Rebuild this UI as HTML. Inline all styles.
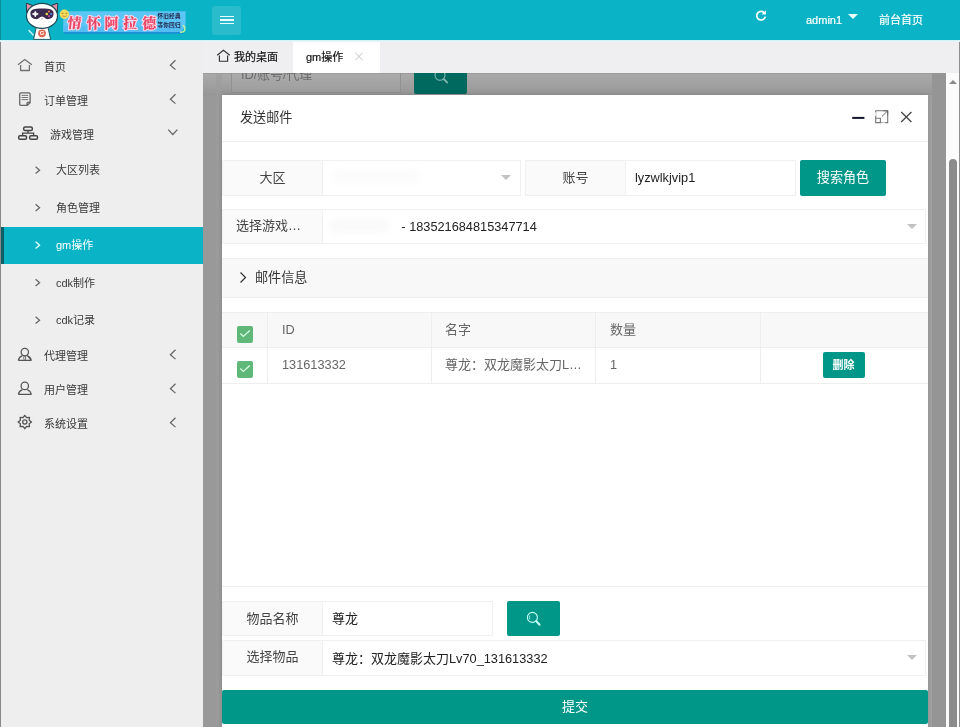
<!DOCTYPE html>
<html lang="zh-CN">
<head>
<meta charset="utf-8">
<title>后台管理</title>
<style>
*{box-sizing:border-box;margin:0;padding:0}
html,body{width:960px;height:727px;overflow:hidden;background:#fff}
body{position:relative;font-family:"Liberation Sans","Noto Sans CJK SC",sans-serif;font-size:13px;color:#333;-webkit-font-smoothing:antialiased}
.abs{position:absolute}
svg{display:block;position:absolute;overflow:visible}
/* header */
#hd{left:0;top:0;width:960px;height:40px;background:#0ab4c6}
#hdline{left:0;top:40px;width:960px;height:2px;background:linear-gradient(#cdf3f7,#e9f6f8);z-index:5}
#burger{left:212.4px;top:5.7px;width:29px;height:29.5px;border-radius:3px;background:#2abccd}
#burger i{position:absolute;left:7.6px;width:14px;height:1.4px;background:#e8fbfd}
.hdt{color:#fff;font-size:11px;line-height:14px;white-space:nowrap;-webkit-text-stroke:0.2px #fff}
/* sidebar */
#sb{left:0;top:41px;width:203px;height:686px;background:#eeeeee}
#sbedge{left:0;top:41px;width:1px;height:686px;background:#8a8a8a}
.mi{position:absolute;left:0;width:203px;height:34px;font-size:11px;color:#3a3a3a;line-height:34px;white-space:nowrap}
.mi span{position:absolute;left:44px;top:0}
.si{position:absolute;left:0;width:203px;height:37.5px;font-size:11px;color:#3a3a3a;line-height:37.5px;white-space:nowrap}
.si span{position:absolute;left:56px;top:0.5px}
.si.on{background:#0ab4c6;color:#fff}
.si.on:before{content:"";position:absolute;left:0;top:0;width:4px;height:100%;background:#0d5f66}
/* tabs */
#tabs{left:203px;top:41px;width:757px;height:32px;background:#efeff1}
#tabon{left:293px;top:41px;width:87px;height:32px;background:#fff}
.tt{font-size:11px;line-height:14px;color:#111;white-space:nowrap;-webkit-text-stroke:0.2px #111}
/* mask */
#mask{left:203px;top:73px;width:743px;height:654px;background:#999}
#mask:after{content:"";position:absolute;left:725px;top:0;width:4px;height:654px;background:#a2a2a2}
/* scrollbar */
#track{left:946px;top:73px;width:13px;height:654px;background:#fbfbfb}
#thumb{left:949px;top:159px;width:8px;height:580px;border-radius:4px;background:#8b8b8b}
#redge{left:959px;top:41px;width:1px;height:686px;background:#8e8e8e}
/* modal */
#md{left:222px;top:95px;width:706px;height:640px;background:#fff;box-shadow:0 0 5px rgba(0,0,0,.16)}
.ln{position:absolute;height:1px;background:#eeeeee}
.lb{position:absolute;width:101px;height:35px;background:#fafafa;border:1px solid #f0f0f0;text-align:center;line-height:34px;font-size:13px;color:#444;white-space:nowrap}
.ip{position:absolute;height:35px;background:#fff;border:1px solid #f0f0f0;line-height:34px;font-size:13px;color:#222;padding-left:9px;white-space:nowrap;overflow:hidden}
.car{position:absolute;width:0;height:0;border-left:5.5px solid transparent;border-right:5.5px solid transparent;border-top:5.5px solid #c2c2c2}
.btn{position:absolute;background:#009688;color:#fff;border-radius:2px;text-align:center;white-space:nowrap}
.th{position:absolute;font-size:13px;color:#666;line-height:16px;white-space:nowrap}
.n{font-size:12.75px}
.cb{position:absolute;width:16px;height:17px;border-radius:2px;background:#5fb878}
</style>
</head>
<body>
<div id="root" class="abs" style="left:0;top:0;width:960px;height:727px;overflow:hidden;will-change:transform">
<!-- header -->
<div id="hd" class="abs"></div>
<div id="hdline" class="abs"></div>
<div id="burger" class="abs"><i style="top:10px"></i><i style="top:13.6px"></i><i style="top:17.2px"></i></div>
<div id="logo" class="abs" style="left:0;top:0;width:203px;height:40px">
<svg style="left:0;top:0" width="203" height="40" viewBox="0 0 203 40">
  <!-- banner -->
  <rect x="64" y="32" width="119" height="1.8" fill="#1c8fd6"/>
  <path d="M63.2 11.2H185.6V27L180 32H63.2Z" fill="#5cc6f6"/>
  <path d="M63.2 26H182V32H63.2Z" fill="#55bdf3"/>
  <path d="M182.6 25.4a3.5 3.5 0 1 1 -2.4 6.6" fill="none" stroke="#c4f2a4" stroke-width="1.5"/>
  <!-- tail -->
  <path d="M29 30.5L33.2 35" stroke="#d9f6fb" stroke-width="1.3" fill="none" stroke-linecap="round"/>
  <!-- ears -->
  <path d="M26.6 12.5L26.3 4.2Q26.3 3.2 27.4 3.5L34.5 6.2Z" fill="#e98ea6" stroke="#1d4a55" stroke-width="1.1" stroke-linejoin="round"/>
  <path d="M57.4 12.5L57.7 4.2Q57.7 3.2 56.6 3.5L49.5 6.2Z" fill="#e98ea6" stroke="#1d4a55" stroke-width="1.1" stroke-linejoin="round"/>
  <!-- body -->
  <path d="M36.2 27.5L33.6 39.4H50.6L48 27.5Z" fill="#ffffff" stroke="#1d4a55" stroke-width="0.9" stroke-linejoin="round"/>
  <circle cx="42" cy="33.3" r="3.9" fill="#e0674f"/>
  <!-- head -->
  <ellipse cx="42" cy="15.9" rx="15.5" ry="12.5" fill="#ffffff" stroke="#1d4a55" stroke-width="1.2"/>
  <path d="M30.4 13.5C30.4 9.6 33.5 8.6 42 8.6C50.5 8.6 53.6 9.6 53.6 13.5C53.6 17.2 51 19.2 47.6 19.2C45 19.2 44.2 16.6 42 16.6C39.8 16.6 39 19.2 36.4 19.2C33 19.2 30.4 17.2 30.4 13.5Z" fill="#3b2a4f"/>
  <path d="M35.3 11.2L36.2 13.2L38.3 14L36.2 14.8L35.3 16.8L34.4 14.8L32.3 14L34.4 13.2Z" fill="#ffffff" stroke="#fff" stroke-width="0.8" stroke-linejoin="round"/>
  <circle cx="46.8" cy="14" r="1.3" fill="#f2d24a"/>
  <circle cx="49" cy="11.6" r="1" fill="#e8794a"/>
  <circle cx="51.2" cy="14" r="1.1" fill="#5a8be0"/>
  <circle cx="49" cy="16.2" r="1" fill="#c94f9c"/>
  <path d="M41 18.6h2l-1 1z" fill="#8a7a7a"/>
  <!-- emoji -->
  <circle cx="64.4" cy="14.3" r="4.7" fill="#f4dc5a"/>
  <path d="M61.6 13.4h2M65.4 13.4h2" stroke="#b9832a" stroke-width="1"/>
  <path d="M62.4 15.8q2 1.6 4 0" stroke="#c8742a" stroke-width="0.8" fill="none"/>
  <text x="42" y="35.4" text-anchor="middle" font-family="Liberation Sans, sans-serif" font-weight="bold" font-size="6" fill="#fff">G</text>
  <g font-family="Liberation Serif, Noto Serif CJK SC, serif" font-weight="900" font-size="14" fill="#ea4766" stroke="#fbd9ec" stroke-width="2.1" paint-order="stroke" stroke-linejoin="round">
    <text x="67.6" y="27.6" transform="skewX(-6)" style="transform-origin:74px 22px">情</text>
    <text x="86.4" y="27.6">怀</text>
    <text x="104.4" y="27.6">阿</text>
    <text x="123.2" y="27.6">拉</text>
    <text x="142.2" y="27.6">德</text>
  </g>
  <g font-family="Liberation Sans, Noto Sans CJK SC, sans-serif" font-weight="bold" font-size="5.6" fill="#23264a" letter-spacing="0.2">
    <text x="157.5" y="18.3">怀旧经典</text>
    <text x="157.5" y="26.9">等你回归</text>
  </g>
</svg>
</div>
<svg style="left:755px;top:9px" width="12" height="13" viewBox="0 0 12 13"><path d="M9.6 4.2A4.3 4.3 0 1 0 10.3 7.6" fill="none" stroke="#fff" stroke-width="1.7"/><path d="M6.6 5.6L10.9 5.6L10.9 1.2Z" fill="#fff"/></svg>
<div class="abs hdt" style="left:806px;top:13px">admin1</div>
<div class="abs" style="left:848px;top:14px;width:0;height:0;border-left:5px solid transparent;border-right:5px solid transparent;border-top:5px solid #e8fbfd"></div>
<div class="abs hdt" style="left:879px;top:13px">前台首页</div>

<!-- sidebar -->
<div id="sb" class="abs">
  <div class="mi" style="top:9px"><span>首页</span></div>
  <div class="mi" style="top:43px"><span>订单管理</span></div>
  <div class="mi" style="top:77px"><span style="left:50px">游戏管理</span></div>
  <div class="si" style="top:110.5px"><span>大区列表</span></div>
  <div class="si" style="top:148px"><span>角色管理</span></div>
  <div class="si on" style="top:185.5px"><span>gm操作</span></div>
  <div class="si" style="top:223px"><span>cdk制作</span></div>
  <div class="si" style="top:260.5px"><span>cdk记录</span></div>
  <div class="mi" style="top:298px"><span>代理管理</span></div>
  <div class="mi" style="top:332px"><span>用户管理</span></div>
  <div class="mi" style="top:366px"><span>系统设置</span></div>
</div>
<div id="sbedge" class="abs"></div>
<div class="abs" style="left:0;top:0;width:1px;height:41px;background:#0b8d9b"></div>
<svg id="ic" style="left:0;top:0" width="203" height="727" viewBox="0 0 203 727" fill="none" stroke="#666" stroke-width="1.05">
  <!-- home -->
  <path d="M18 64.8L24.8 59.6L31.8 64.8M20.6 65V70.5H29.4V65" stroke="#727272" stroke-width="1.3" stroke-linejoin="round"/>
  <!-- doc -->
  <path d="M20.8 92.8H29Q30.1 92.8 30.1 93.9V102.6L27.3 105.3H20.8Q19.7 105.3 19.7 104.2V93.9Q19.7 92.8 20.8 92.8ZM27 105V103.2Q27 102.4 27.8 102.4H29.8" stroke="#666" stroke-width="1.3"/>
  <path d="M21.6 95.4H28.2M21.6 97.5H28.2M21.6 99.6H28.2" stroke="#777" stroke-width="1"/>
  <!-- org -->
  <g stroke="#444" stroke-width="1.5">
    <rect x="23.7" y="127.1" width="8.6" height="3.5" rx="1.3"/>
    <rect x="18.7" y="135.8" width="7.8" height="3.5" rx="1.3"/>
    <rect x="29.7" y="135.8" width="7.8" height="3.5" rx="1.3"/>
    <path d="M28 130.6V133.2M22.6 135.8V133.2H33.6V135.8" stroke-width="1.3"/>
  </g>
  <!-- agent -->
  <g stroke="#555" stroke-width="1.25">
    <circle cx="24.8" cy="352.1" r="3.7"/>
    <path d="M18.3 360.3C18.8 358 20.4 356.5 22.3 355.7M27.3 355.7C29.2 356.5 30.9 358 31.5 360.3ZM18.3 360.3H31.5"/>
    <ellipse cx="24.7" cy="358" rx="1" ry="2.2" stroke-width="0.8"/>
  </g>
  <!-- user -->
  <g stroke="#555" stroke-width="1.25">
    <circle cx="24.8" cy="385.9" r="3.7"/>
    <path d="M18.3 394.3C18.8 392 20.4 390.4 22.3 389.6M27.3 389.6C29.2 390.4 30.9 392 31.5 394.3M18.3 394.3H31.5"/>
  </g>
  <!-- gear -->
  <g stroke="#555" stroke-width="1.3">
    <path d="M24.8 415.3L26.6 417.6L29.5 417.3L29.2 420.2L31.5 422L29.2 423.8L29.5 426.7L26.6 426.4L24.8 428.7L23 426.4L20.1 426.7L20.4 423.8L18.1 422L20.4 420.2L20.1 417.3L23 417.6Z" stroke-linejoin="round"/>
    <circle cx="24.8" cy="422" r="2.1"/>
  </g>
  <!-- chevrons -->
  <g stroke="#666" stroke-width="1.25">
    <path d="M175.5 60.3L170.4 65.2L175.5 69.6"/>
    <path d="M175.5 94.3L170.4 99.2L175.5 103.6"/>
    <path d="M168.2 129.6L172.8 134.5L177.4 129.6"/>
    <path d="M175.5 349.8L170.4 354.7L175.5 359.1"/>
    <path d="M175.5 383.8L170.4 388.7L175.5 393.1"/>
    <path d="M175.5 417.8L170.4 422.7L175.5 427.1"/>
    <path d="M35.6 166.8L39.6 170.2L35.6 173.6"/>
    <path d="M35.6 204.3L39.6 207.7L35.6 211.1"/>
    <path d="M35.6 241.8L39.6 245.2L35.6 248.6" stroke="#e8fdff" stroke-width="1.3"/>
    <path d="M35.6 279.3L39.6 282.7L35.6 286.1"/>
    <path d="M35.6 316.8L39.6 320.2L35.6 323.6"/>
  </g>
</svg>


<!-- tabs -->
<div id="tabs" class="abs"></div>
<div id="tabon" class="abs"></div>
<div class="abs tt" style="left:234px;top:50px">我的桌面</div>
<div class="abs tt" style="left:306px;top:50px">gm操作</div>

<svg style="left:0;top:0" width="960" height="100" viewBox="0 0 960 100" fill="none">
  <!-- tab home -->
  <path d="M217.2 55.2L223.4 50.2L229.8 55.2M219.4 55.4V61.2H227.6V55.4" stroke="#333" stroke-width="1.15"/>
  <!-- tab close -->
  <path d="M355.3 52.8L362.6 60.2M362.6 52.8L355.3 60.2" stroke="#c4c4c4" stroke-width="1"/>
</svg>
<!-- mask -->
<div id="mask" class="abs"></div>
<div class="abs" style="left:293px;top:73px;width:87px;height:1px;background:#f4f4f4"></div>
<div class="abs" style="left:203px;top:73px;width:743px;height:22px;background:linear-gradient(#959595 0,#a8a8a8 1.5px,#a6a6a6 5px,#989898 21px,#939393 22px)"></div>
<div class="abs" style="left:216px;top:73px;width:6px;height:654px;background:#9d9d9d;opacity:.6"></div>
<div class="abs" style="left:203px;top:73px;width:743px;height:22px;overflow:hidden">
  <div class="abs" style="left:28px;top:-14px;width:170px;height:34px;border:1px solid #919191;background:rgba(255,255,255,.03)"></div>
  <div class="abs" style="left:38px;top:-6.5px;font-size:12.8px;line-height:16px;color:#6c6c6c;white-space:nowrap">ID/账号/代理</div>
  <div class="abs" style="left:211px;top:-14px;width:53px;height:34.6px;border-radius:2px;background:#00695f"></div>
  <svg style="left:211px;top:0" width="53" height="21" viewBox="0 0 53 21" fill="none"><circle cx="26" cy="2.3" r="5" stroke="#7fb5ae" stroke-width="1.1"/><path d="M29.9 6.1L33 9.4" stroke="#7fb5ae" stroke-width="2" stroke-linecap="round"/></svg>
</div>
<div class="abs" style="left:932px;top:73px;width:14px;height:654px;background:#959595"></div>
<!-- scrollbar -->
<div id="track" class="abs"></div>
<div id="thumb" class="abs"></div>
<div class="abs" style="left:948.5px;top:80px;width:0;height:0;border-left:4.5px solid transparent;border-right:4.5px solid transparent;border-bottom:4.5px solid #8a8a8a"></div>
<div id="redge" class="abs"></div>

<!-- modal -->
<div id="md" class="abs">
  <div class="abs" style="left:18px;top:14px;font-size:13.1px;line-height:18px;color:#333;white-space:nowrap">发送邮件</div>
  <div class="ln" style="left:0;top:46px;width:706px"></div>

  <div class="lb" style="left:0;top:65px;height:36px;line-height:33px">大区</div>
  <div class="ip" style="left:100px;top:65px;width:199px;height:36px;line-height:33px"></div>
  <div class="car" style="left:278.5px;top:80px"></div>
  <div class="lb" style="left:303px;top:65px;height:36px;line-height:33px">账号</div>
  <div class="ip" style="left:403px;top:65px;width:171px;height:36px;line-height:33px"><span class="n">lyzwlkjvip1</span></div>
  <div class="btn" style="left:578px;top:65px;width:86px;height:36px;line-height:36px;font-size:13.1px">搜索角色</div>

  <div class="lb" style="left:0;top:114px;text-align:left;padding-left:13px;line-height:32px">选择游戏…</div>
  <div class="ip" style="left:100px;top:114px;width:604px;line-height:34px"><span style="display:inline-block;width:65.8px"></span><span class="n"> - 183521684815347714</span></div>
  <div class="car" style="left:684.5px;top:129px"></div>
  <div class="abs" style="left:110px;top:75px;width:88px;height:14px;border-radius:7px;background:#fbfbfb;filter:blur(3px)"></div>
  <div class="abs" style="left:106px;top:124px;width:62px;height:14px;border-radius:7px;background:#fafafa;filter:blur(3px)"></div>

  <div class="abs" style="left:0;top:163px;width:706px;height:40px;background:#f8f8f8;border-top:1px solid #eee;border-bottom:1px solid #eee"></div>
  <div class="abs" style="left:33px;top:174px;font-size:13.1px;line-height:18px;color:#333;white-space:nowrap">邮件信息</div>

  <!-- table -->
  <div class="abs" style="left:0;top:217px;width:706px;height:36px;background:#f8f8f8;border-top:1px solid #eee;border-bottom:1px solid #eee"></div>
  <div class="ln" style="left:0;top:288px;width:706px"></div>
  <div class="abs" style="left:45px;top:217px;width:1px;height:72px;background:#eee"></div>
  <div class="abs" style="left:209px;top:217px;width:1px;height:72px;background:#eee"></div>
  <div class="abs" style="left:373px;top:217px;width:1px;height:72px;background:#eee"></div>
  <div class="abs" style="left:538px;top:217px;width:1px;height:72px;background:#eee"></div>
  <div class="cb" style="left:15px;top:230.5px"></div>
  <div class="cb" style="left:15px;top:265.5px"></div>
  <div class="th" style="left:60px;top:227px"><span class="n">ID</span></div>
  <div class="th" style="left:223px;top:227px">名字</div>
  <div class="th" style="left:388px;top:227px">数量</div>
  <div class="th" style="left:60px;top:261.5px"><span class="n">131613332</span></div>
  <div class="th" style="left:223px;top:261.5px">尊龙：双龙魔影太刀<span class="n">L…</span></div>
  <div class="th" style="left:388px;top:261.5px"><span class="n">1</span></div>
  <div class="btn" style="left:600.5px;top:257px;width:42px;height:26px;line-height:26px;font-size:11px;font-weight:bold">删除</div>

  <div class="ln" style="left:0;top:491px;width:706px"></div>
  <div class="lb" style="left:0;top:506px;line-height:33px">物品名称</div>
  <div class="ip" style="left:100px;top:506px;width:171px;line-height:33px">尊龙</div>
  <div class="btn" style="left:284.5px;top:506px;width:53px;height:35px"></div>
  <div class="lb" style="left:0;top:545px;height:36px;line-height:32px">选择物品</div>
  <div class="ip" style="left:100px;top:545px;width:604px;height:36px;line-height:35px">尊龙：双龙魔影太刀<span class="n">Lv70_131613332</span></div>
  <div class="car" style="left:684.5px;top:560px"></div>
  <div class="btn" style="left:0;top:595px;width:706px;height:34px;line-height:34px;font-size:13px">提交</div>
  <svg style="left:0;top:0" width="706" height="632" viewBox="0 0 706 632" fill="none">
    <path d="M630.2 22.9H642.4" stroke="#14142b" stroke-width="2"/>
    <path d="M653.7 15.8H665.7V27.6H653.7ZM653.7 23.2H658.4V27.6" stroke="#777" stroke-width="1.1"/>
    <path d="M659.4 28.2H663.2" stroke="#fff" stroke-width="1.6"/>
    <path d="M653 17.2V21" stroke="#fff" stroke-width="1.6"/>
    <path d="M660 21.4L665.3 16.2M661.4 15.8H665.7V20.2" stroke="#666" stroke-width="1"/>
    <path d="M679.2 17L689.4 27M689.4 17L679.2 27" stroke="#444" stroke-width="1.3"/>
    <path d="M18.5 177.5L23.5 182.5L18.5 187.5" stroke="#333" stroke-width="1.2"/>
    <path d="M18.4 238.5L21.3 241.4L27.8 235.4" stroke="#d9ffe6" stroke-width="1.3"/>
    <path d="M18.4 273.5L21.3 276.4L27.8 270.4" stroke="#d9ffe6" stroke-width="1.3"/>
    <circle cx="310.4" cy="522.4" r="5" stroke="#c4fff6" stroke-width="1.1"/>
    <path d="M308 520.6a2.8 2.8 0 0 0 0 3.6" stroke="#c4fff6" stroke-width="0.8"/>
    <path d="M314.3 526.2L317.6 529.7" stroke="#c4fff6" stroke-width="2" stroke-linecap="round"/>
  </svg>

</div>
</div>
</body>
</html>
